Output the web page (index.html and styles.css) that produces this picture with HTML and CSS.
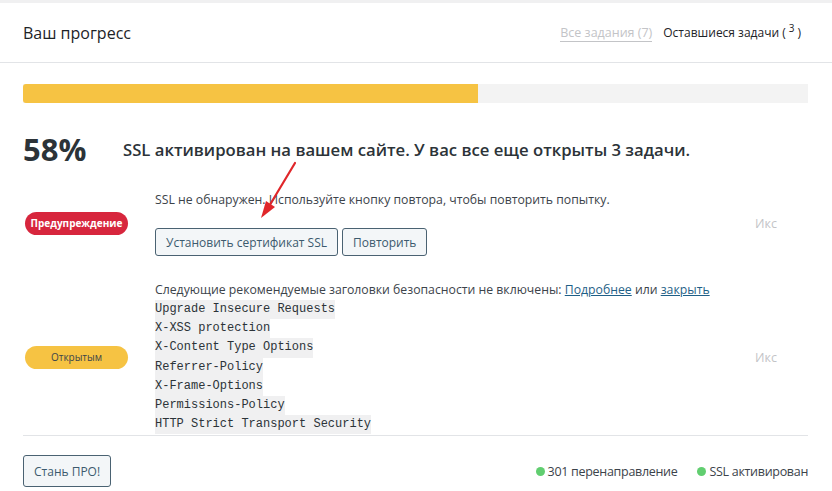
FILE: index.html
```html
<html>
<head>
	<title>Ваш прогресс</title>
	<link rel="stylesheet" href="styles.css">
</head>
<body>
	<div class="card">
		<div class="cardHeader">
			<h3 class="cardTitle">Ваш прогресс</h3>
			<div class="tabs">
				<a class="tab tabInactive" href="#">Все задания (7)</a>
				<span class="tab tabActive">Оставшиеся задачи (<sup>3</sup>)</span>
			</div>
		</div>
		<div class="cardBody">
			<div class="progressBar">
				<div class="progressFill" style="width: 58%;"></div>
			</div>
			<div class="score">
				<span class="scorePercent">58%</span>
				<span class="scoreText">SSL активирован на вашем сайте. У вас все еще открыты 3 задачи.</span>
			</div>
			<div class="taskList">
				<div class="taskRow">
					<div class="taskBadge"><span class="badge badgeWarning">Предупреждение</span></div>
					<div class="taskContent">
						<p class="taskText">SSL не обнаружен. Используйте кнопку повтора, чтобы повторить попытку.</p>
						<div class="taskButtons">
							<button class="btn">Установить сертификат SSL</button>
							<button class="btn">Повторить</button>
						</div>
					</div>
					<div class="taskDismiss">Икс</div>
				</div>
				<div class="taskRow">
					<div class="taskBadge"><span class="badge badgeOpen">Открытым</span></div>
					<div class="taskContent">
						<p class="taskText">Следующие рекомендуемые заголовки безопасности не включены: <a href="#">Подробнее</a> или <a href="#">закрыть</a></p>
						<div class="codeList">
							<code>Upgrade Insecure Requests</code>
							<code>X-XSS protection</code>
							<code>X-Content Type Options</code>
							<code>Referrer-Policy</code>
							<code>X-Frame-Options</code>
							<code>Permissions-Policy</code>
							<code>HTTP Strict Transport Security</code>
						</div>
					</div>
					<div class="taskDismiss">Икс</div>
				</div>
			</div>
			<div class="cardFooter">
				<button class="btn btnPro">Стань ПРО!</button>
				<div class="statusList">
					<span class="status"><i class="dot"></i>301 перенаправление</span>
					<span class="status"><i class="dot"></i>SSL активирован</span>
				</div>
			</div>
		</div>
		<svg class="arrow" width="60" height="80" viewBox="0 0 60 80">
			<line x1="37" y1="7" x2="10" y2="52" stroke="#e0262a" stroke-width="2.2" stroke-linecap="round"/>
			<polygon points="3,62 8,45 17,51" fill="#e0262a"/>
		</svg>
	</div>
</body>
</html>
```

FILE: styles.css
```css
body {
	margin: 0;
	background-color: #f0f0f1;
	font-family: "Open Sans", "Liberation Sans", sans-serif;
	color: #3c434a;
}
.card {
	position: relative;
	margin-top: 3px;
	height: 488px;
	background-color: #fff;
	overflow: hidden;
}
.cardHeader {
	display: flex;
	align-items: center;
	justify-content: space-between;
	height: 59px;
	padding: 0 31px 0 23px;
	border-bottom: 1px solid #e2e4e7;
}
.cardTitle {
	margin: 0;
	font-size: 16px;
	font-weight: 500;
	color: #1d2327;
}
.tabs {
	display: flex;
	align-items: center;
	gap: 11px;
	font-size: 12.5px;
	color: #1d2327;
}
.tabActive {
	font-size: 12px;
	white-space: nowrap;
}
.tab sup {
	font-size: 10px;
	line-height: 0;
	padding: 0 3px;
}
.tabInactive {
	color: #c3c4c7;
	text-decoration: none;
	border-bottom: 1px solid #c3c4c7;
}
.cardBody {
	padding: 21px 24px 0 23px;
}
.progressBar {
	height: 19px;
	background-color: #f3f3f3;
}
.progressFill {
	height: 100%;
	background-color: #f6c343;
	border-radius: 3px 0 0 3px;
}
.score {
	display: flex;
	align-items: center;
	height: 58px;
	margin-top: 17px;
}
.scorePercent {
	width: 100px;
	font-size: 31px;
	font-weight: 700;
	color: #2c3338;
}
.scoreText {
	font-size: 16.7px;
	font-weight: 600;
	color: #2c3338;
}
.taskList {
	border-bottom: 1px solid #e2e4e7;
	height: 257px;
	overflow: hidden;
}
.taskRow {
	display: grid;
	grid-template-columns: 132px 1fr 53px;
	align-items: center;
	padding: 13px 0 8px;
}
.taskRow + .taskRow {
	padding-top: 17px;
}
.taskBadge {
	padding-left: 2px;
}
.badge {
	display: inline-block;
	width: 103px;
	height: 23px;
	line-height: 23px;
	border-radius: 12px;
	text-align: center;
	font-size: 10px;
}
.badgeWarning {
	background-color: #d7263d;
	color: #fff;
	font-weight: 700;
}
.badgeOpen {
	background-color: #f6c343;
	color: #3c434a;
}
.taskText {
	margin: 0;
	font-size: 12.25px;
	line-height: 18px;
}
.taskText a {
	color: #1f5f87;
}
.taskButtons {
	display: flex;
	gap: 4px;
	margin-top: 19px;
}
.btn {
	height: 28px;
	padding: 0 10px;
	font-family: inherit;
	font-size: 12px;
	color: #3c5a6e;
	background-color: #f3f6f8;
	border: 1px solid #4a6272;
	border-radius: 3px;
}
.taskDismiss {
	font-size: 12.5px;
	color: #c3c4c7;
}
.codeList {
	display: flex;
	flex-direction: column;
	align-items: flex-start;
	margin-top: 1px;
}
.codeList code {
	font-family: "Liberation Mono", "DejaVu Sans Mono", monospace;
	font-size: 12px;
	line-height: 19.2px;
	background-color: #f0f0f1;
	color: #2c3338;
}
.cardFooter {
	display: flex;
	align-items: center;
	justify-content: space-between;
	padding-top: 19px;
}
.btnPro {
	height: 32px;
	padding: 0 10px;
}
.statusList {
	display: flex;
	gap: 20px;
	font-size: 12.5px;
	letter-spacing: -0.3px;
	color: #3c434a;
}
.status {
	display: flex;
	align-items: center;
}
.dot {
	display: inline-block;
	width: 9px;
	height: 9px;
	margin-right: 3px;
	border-radius: 50%;
	background-color: #61ce70;
}
.arrow {
	position: absolute;
	left: 258px;
	top: 153px;
}
```
